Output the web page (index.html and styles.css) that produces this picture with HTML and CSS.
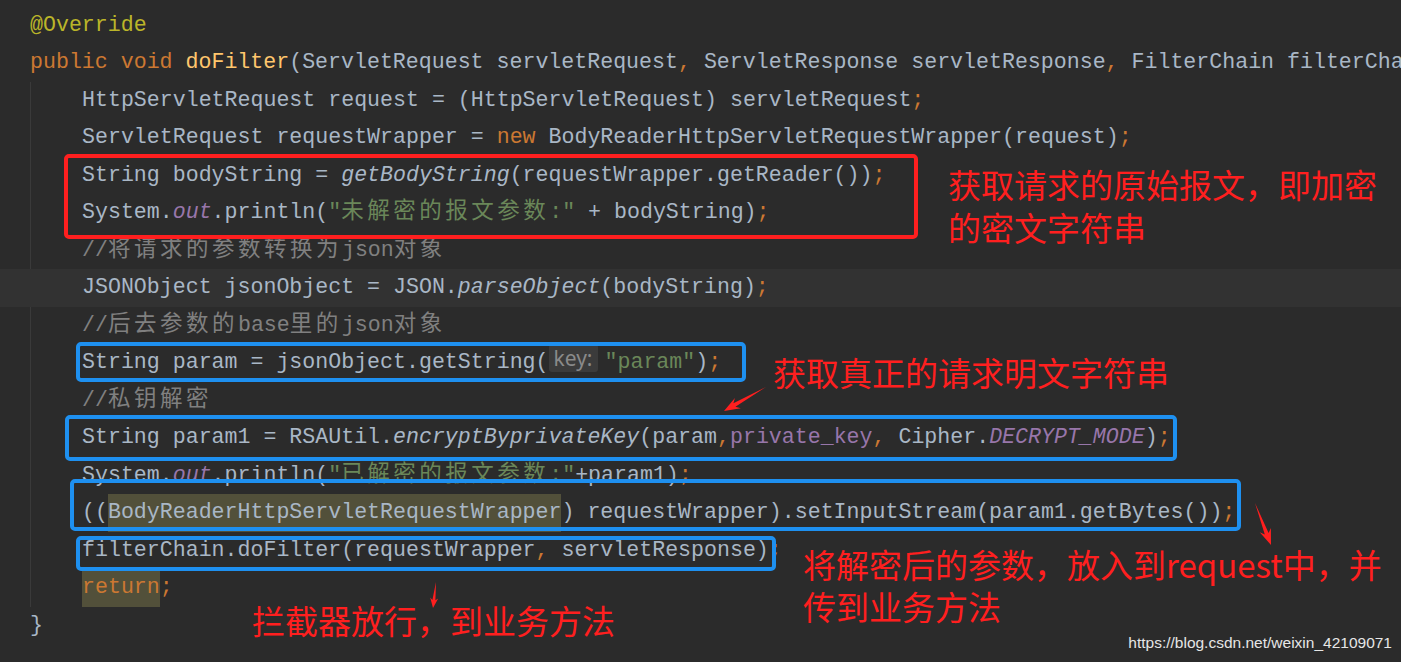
FILE: index.html
```html
<!DOCTYPE html>
<html lang="zh-CN">
<head>
    <meta charset="UTF-8">
    <title>doFilter</title>
    <link rel="stylesheet" href="styles.css">
</head>
<body>
    <div class="editor">
        <div class="code">
            <div class="ln"><span class="ann">@Override</span></div>
            <div class="ln"><span class="kw">public void </span><span class="decl">doFilter</span>(ServletRequest servletRequest<span class="kw">, </span>ServletResponse servletResponse<span class="kw">, </span>FilterChain filterChain) <span class="kw">throws </span>IOException<span class="kw">, </span>ServletException {</div>
            <div class="block">
                <div class="ln">HttpServletRequest request = (HttpServletRequest) servletRequest<span class="kw">;</span></div>
                <div class="ln">ServletRequest requestWrapper = <span class="kw">new </span>BodyReaderHttpServletRequestWrapper(request)<span class="kw">;</span></div>
                <div class="ln">String bodyString = <span class="it">getBodyString</span>(requestWrapper.getReader())<span class="kw">;</span></div>
                <div class="ln">System.<span class="field it">out</span>.println(<span class="str">"<span class="cn">未解密的报文参数</span>:"</span> + bodyString)<span class="kw">;</span></div>
                <div class="ln cmt">//<span class="cn">将请求的参数转换为</span>json<span class="cn">对象</span></div>
                <div class="ln current">JSONObject jsonObject = JSON.<span class="it">parseObject</span>(bodyString)<span class="kw">;</span></div>
                <div class="ln cmt">//<span class="cn">后去参数的</span>base<span class="cn">里的</span>json<span class="cn">对象</span></div>
                <div class="ln">String param = jsonObject.getString(<span class="hint">key:</span><span class="str">"param"</span>)<span class="kw">;</span></div>
                <div class="ln cmt">//<span class="cn">私钥解密</span></div>
                <div class="ln">String param1 = RSAUtil.<span class="it">encryptByprivateKey</span>(param<span class="kw">,</span><span class="field">private_key</span><span class="kw">, </span>Cipher.<span class="field it">DECRYPT_MODE</span>)<span class="kw">;</span></div>
                <div class="ln">System.<span class="field it">out</span>.println(<span class="str">"<span class="cn">已解密的报文参数</span>:"</span>+param1)<span class="kw">;</span></div>
                <div class="ln">((<span class="mark">BodyReaderHttpServletRequestWrapper</span>) requestWrapper).setInputStream(param1.getBytes())<span class="kw">;</span></div>
                <div class="ln">filterChain.doFilter(requestWrapper<span class="kw">, </span>servletResponse)<span class="kw">;</span></div>
                <div class="ln"><span class="kw mark">return</span><span class="kw">;</span></div>
            </div>
            <div class="ln">}</div>
        </div>

        <!-- annotations drawn over the code -->
        <div class="box red box-body"></div>
        <div class="box blue box-param"></div>
        <div class="box blue box-decrypt"></div>
        <div class="box blue box-stream"></div>
        <div class="box blue box-chain"></div>

        <div class="note note-body">获取请求的原始报文，即加密<br>的密文字符串</div>
        <div class="note note-param">获取真正的请求明文字符串</div>
        <div class="note note-stream">将解密后的参数，放入到request中，并<br>传到业务方法</div>
        <div class="note note-chain">拦截器放行，到业务方法</div>

        <svg class="arrows" width="1401" height="662" viewBox="0 0 1401 662">
            <polygon points="766,387 735.4,406.7 740.9,408.3 724,411 734.9,397.9 733.4,403.3" />
            <polygon points="1255,503 1264.8,534.5 1259.7,532.2 1271,545 1270.9,528 1268.6,533.1" />
            <polygon points="436,582 432.4,599.9 430.2,597.6 433,608 438.2,598.6 435.4,600.3" />
        </svg>

        <div class="watermark">https://blog.csdn.net/weixin_42109071</div>
    </div>
</body>
</html>
```

FILE: styles.css
```css
body {
    margin: 0;
    background-color: #2b2b2b;
    overflow: hidden;
}
.editor {
    position: relative;
    width: 1401px;
    height: 662px;
    overflow: hidden;
}
.code {
    padding: 6.5px 0 0 30px;
    font-family: "Liberation Mono", monospace;
    font-size: 21.6px;
    color: #a9b7c6;
}
.ln {
    height: 37.5px;
    line-height: 37.5px;
    white-space: pre;
    overflow: hidden;
}
.block {
    border-left: 1px solid #3a3a3a;
    padding-left: 51px;
}
.current {
    background-color: #323232;
    margin-left: -82px;
    padding-left: 82px;
}
.cn {
    font-family: "Noto Sans CJK SC", sans-serif;
    font-size: 22.5px;
    line-height: 1;
    letter-spacing: 3.5px;
}
.ann {
    color: #bbb529;
}
.kw {
    color: #cc7832;
}
.decl {
    color: #ffc66d;
}
.it {
    font-style: italic;
}
.field {
    color: #9876aa;
}
.str {
    color: #6a8759;
}
.cmt {
    color: #808080;
}
.mark {
    background-color: #52503a;
    display: inline-block;
    height: 37.5px;
}
.hint {
    display: inline-block;
    height: 28px;
    line-height: 28px;
    padding: 0 5px;
    margin-right: 7px;
    border-radius: 3px;
    background-color: #3b3b3b;
    color: #8a8a8a;
    font-family: "Noto Sans", sans-serif;
    font-size: 21px;
    vertical-align: 2px;
}
.box {
    position: absolute;
    border: 4px solid;
    border-radius: 5px;
    box-sizing: border-box;
}
.red {
    border-color: #ff1f1f;
}
.blue {
    border-color: #1e90f0;
}
.box-body {
    left: 64px;
    top: 154px;
    width: 854px;
    height: 85px;
}
.box-param {
    left: 76px;
    top: 342px;
    width: 670px;
    height: 40px;
}
.box-decrypt {
    left: 65px;
    top: 415px;
    width: 1112px;
    height: 46px;
}
.box-stream {
    left: 70px;
    top: 479px;
    width: 1171px;
    height: 52px;
}
.box-chain {
    left: 76px;
    top: 536px;
    width: 700px;
    height: 35px;
}
.note {
    position: absolute;
    font-family: "Noto Sans CJK SC", sans-serif;
    font-size: 33px;
    line-height: 43px;
    color: #ff1f1f;
    white-space: nowrap;
}
.note-body {
    left: 948px;
    top: 163px;
}
.note-param {
    left: 773px;
    top: 351px;
}
.note-stream {
    left: 803px;
    top: 543px;
    line-height: 42px;
}
.note-chain {
    left: 252px;
    top: 599px;
}
.arrows {
    position: absolute;
    left: 0;
    top: 0;
    fill: #ff1f1f;
}
.watermark {
    position: absolute;
    right: 9px;
    bottom: 10px;
    font-family: "Liberation Sans", sans-serif;
    font-size: 15.5px;
    color: #e6e6e6;
}
```
